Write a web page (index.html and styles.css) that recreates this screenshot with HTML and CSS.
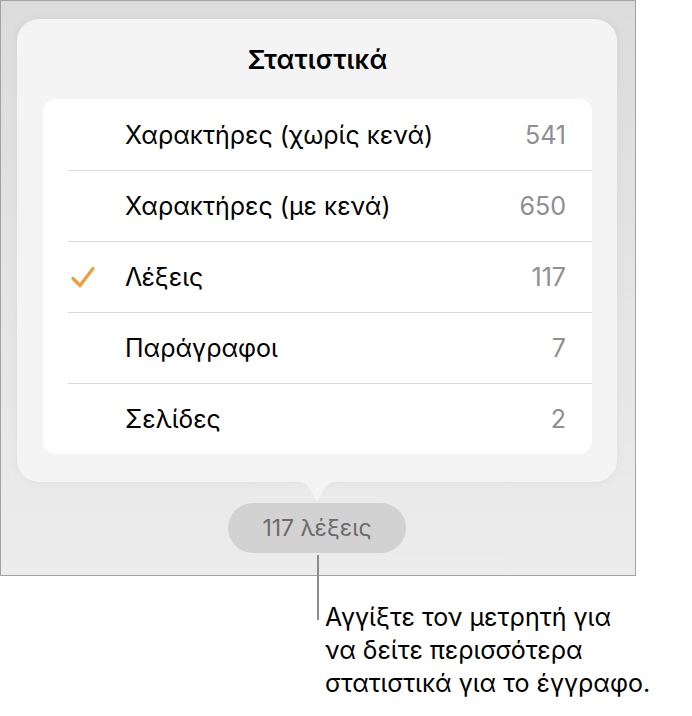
FILE: index.html
```html
<!DOCTYPE html>
<html lang="el">
<head>
<meta charset="utf-8">
<title>Στατιστικά</title>
<link rel="stylesheet" href="styles.css">
</head>
<body>
<div class="frame">
  <div class="popover">
    <h1 class="title">Στατιστικά</h1>
    <ul class="list">
      <li class="row"><span class="check"></span><span class="label">Χαρακτήρες (χωρίς κενά)</span><span class="value">541</span></li>
      <li class="row"><span class="check"></span><span class="label">Χαρακτήρες (με κενά)</span><span class="value">650</span></li>
      <li class="row"><span class="check"><svg viewBox="0 0 24 22" width="24" height="22"><path d="M2 12.5 L9 19.5 L22 2.5" fill="none" stroke="#f29b38" stroke-width="3.2" stroke-linecap="round" stroke-linejoin="round"/></svg></span><span class="label">Λέξεις</span><span class="value">117</span></li>
      <li class="row"><span class="check"></span><span class="label">Παράγραφοι</span><span class="value">7</span></li>
      <li class="row"><span class="check"></span><span class="label">Σελίδες</span><span class="value">2</span></li>
    </ul>
    <svg class="arrow" viewBox="0 0 60 24" width="60" height="24"><path d="M0 0 C14 0 19 3 23 9 L28 19 Q30 23 32 19 L37 9 C41 3 46 0 60 0 Z" fill="#f4f4f4"/></svg>
  </div>
  <div class="pill">117 λέξεις</div>
</div>
<div class="callout">
  <div class="leader"></div>
  <p class="caption">Αγγίξτε τον μετρητή για<br>να δείτε περισσότερα<br>στατιστικά για το έγγραφο.</p>
</div>
</body>
</html>
```

FILE: styles.css
```css
* { box-sizing: border-box; }
html, body { margin: 0; padding: 0; background: #ffffff; }
body { font-family: Inter, "Liberation Sans", sans-serif; color: #000; }

.frame {
  width: 636px;
  height: 576px;
  border: 1px solid #a2a2a2;
  background: linear-gradient(180deg, #dcdcdc 0%, #e6e6e6 60%, #ececec 100%);
  padding-top: 18px;
  padding-left: 16px;
}

.popover {
  position: relative;
  width: 600px;
  height: 463px;
  background: #f4f4f4;
  border-radius: 22px;
  box-shadow: 0 0 10px rgba(0,0,0,0.05);
  padding: 0 25px 0 26px;
}

.title {
  margin: 0;
  height: 80px;
  display: flex;
  align-items: center;
  justify-content: center;
  font-size: 26px;
  font-weight: 600;
  letter-spacing: 0.3px;
}

.list {
  list-style: none;
  margin: 0;
  padding: 0;
  background: #ffffff;
  border-radius: 13px;
  overflow: hidden;
}

.row {
  height: 71px;
  display: flex;
  align-items: center;
  position: relative;
  padding-right: 26px;
}
.row + .row::before {
  content: "";
  position: absolute;
  left: 25px;
  right: 0;
  top: 0;
  height: 1px;
  background: #d9d9d9;
}

.check {
  width: 82px;
  padding-left: 28px;
  display: flex;
  align-items: center;
}

.label {
  flex: 1;
  font-size: 25px;
}

.value {
  font-size: 25px;
  color: #8e8e93;
}

.arrow {
  position: absolute;
  left: 270px;
  bottom: -22px;
  display: block;
}

.pill {
  margin-top: 21px;
  margin-left: 211px;
  width: 178px;
  height: 50px;
  border-radius: 25px;
  background: #d2d2d2;
  display: flex;
  align-items: center;
  justify-content: center;
  font-size: 23px;
  color: #6b6b6b;
}

.callout {
  display: flex;
  margin-left: 317px;
}

.leader {
  width: 2px;
  height: 65px;
  margin-top: -21px;
  background: #8c8c8c;
  flex: none;
}

.caption {
  margin: 25px 0 0 6px;
  font-size: 25px;
  line-height: 33px;
  color: #000;
}
```
